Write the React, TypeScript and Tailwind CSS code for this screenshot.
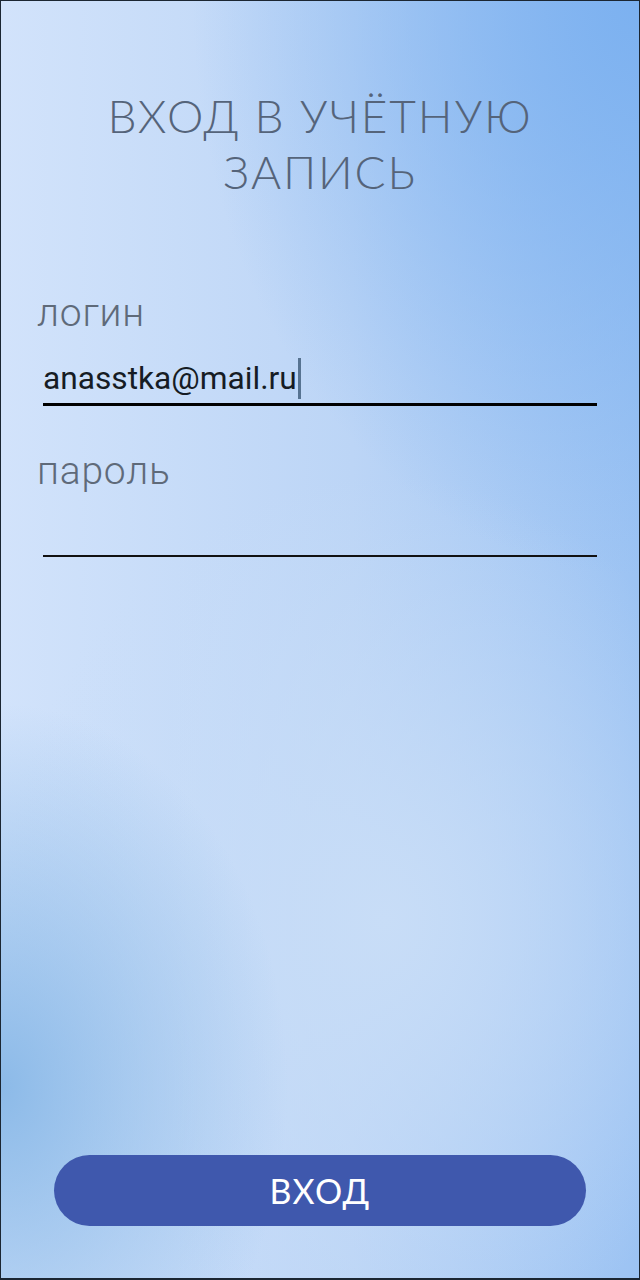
const title = "font-['Lato','Noto_Sans',sans-serif]";
const label = "font-['Roboto',sans-serif] text-[39px] font-light leading-[48px] tracking-[0.02em] text-[#5f6a79]";

export default function App() {
  return (
    <div className="flex h-[1280px] w-[640px] flex-col border border-b-2 border-[#1b2632] bg-[radial-gradient(ellipse_70%_45%_at_100%_0%,#7cb1f0_0%,rgba(124,177,240,0)_100%),radial-gradient(ellipse_45%_30%_at_0%_85%,#8cbae8_0%,rgba(140,186,232,0)_100%),radial-gradient(ellipse_60%_35%_at_60%_72%,#c8ddf7_0%,rgba(200,221,247,0)_100%),linear-gradient(to_right,#d2e3fb_0%,#bcd5f6_55%,#9cc3f3_100%)]">
      <h1
        className={`${title} mt-[87px] px-8 text-center text-[46px] font-light leading-[56px] tracking-[0.04em] text-[#55647a]`}
      >
        ВХОД В УЧЁТНУЮ
        <br />
        ЗАПИСЬ
      </h1>

      <div className="mt-[89px] flex flex-col px-[36px]">
        <label className={label}>логин</label>
        <div className="mx-[6px] mt-[21px] flex items-end border-b-[3px] border-black pb-[4px]">
          <span className="font-['Roboto',sans-serif] text-[31.7px] leading-[40px] text-[#161c24]">
            anasstka@mail.ru
          </span>
          <span className="ml-[1px] h-[41px] w-[3px] bg-[#577391]" />
        </div>

        <label className={`${label} mt-[41px]`}>пароль</label>
        <div className="mx-[6px] h-[62px] border-b-2 border-[#111]" />
      </div>

      <div className="mt-auto mb-[52px] px-[53px]">
        <button
          className={`${title} h-[71px] w-full rounded-full bg-[#3f58ad] text-[34px] font-normal tracking-[0.04em] text-white`}
        >
          ВХОД
        </button>
      </div>
    </div>
  );
}
